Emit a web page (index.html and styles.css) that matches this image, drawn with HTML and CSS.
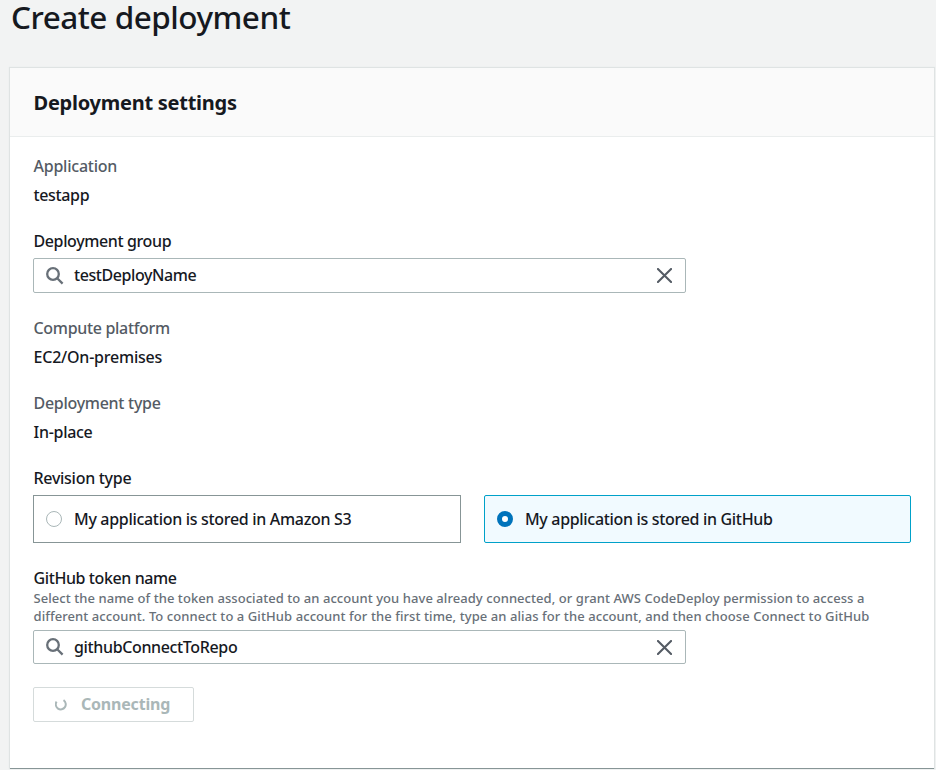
FILE: index.html
```html
<!DOCTYPE html>
<html lang="en">
<head>
<meta charset="utf-8">
<title>Create deployment</title>
<link rel="stylesheet" href="styles.css">
</head>
<body>
<h1 class="page-title"><span class="t-title">Create deployment</span></h1>
<main class="card">
  <header class="card-header"><h2><span class="t-head">Deployment settings</span></h2></header>
  <div class="card-body">
    <section class="field">
      <div class="label muted"><span class="t-app">Application</span></div>
      <div class="value"><span class="t-testapp">testapp</span></div>
    </section>
    <section class="field group">
      <div class="label"><span class="t-group">Deployment group</span></div>
      <div class="search">
        <svg class="icon-search" viewBox="0 0 18 18"><circle cx="7" cy="7" r="5.8"/><path d="M11.2 11.2 16.6 16.6"/></svg>
        <span class="search-text"><span class="t-deploy">testDeployName</span></span>
        <svg class="icon-close" viewBox="0 0 16 16"><path d="M1 1 15 15M15 1 1 15"/></svg>
      </div>
    </section>
    <section class="field">
      <div class="label muted"><span class="t-compute">Compute platform</span></div>
      <div class="value"><span class="t-ec2">EC2/On-premises</span></div>
    </section>
    <section class="field">
      <div class="label muted"><span class="t-type">Deployment type</span></div>
      <div class="value"><span class="t-inplace">In-place</span></div>
    </section>
    <section class="field">
      <div class="label"><span class="t-rev">Revision type</span></div>
      <div class="tiles">
        <div class="tile"><span class="radio"></span><span class="t-s3">My application is stored in Amazon S3</span></div>
        <div class="tile selected"><span class="radio"></span><span class="t-github">My application is stored in GitHub</span></div>
      </div>
    </section>
    <section class="field token">
      <div class="label"><span class="t-token">GitHub token name</span></div>
      <p class="hint"><span class="t-hint1">Select the name of the token associated to an account you have already connected, or grant AWS CodeDeploy permission to access a</span><br><span class="t-hint2">different account. To connect to a GitHub account for the first time, type an alias for the account, and then choose Connect to GitHub</span></p>
      <div class="search">
        <svg class="icon-search" viewBox="0 0 18 18"><circle cx="7" cy="7" r="5.8"/><path d="M11.2 11.2 16.6 16.6"/></svg>
        <span class="search-text"><span class="t-repo">githubConnectToRepo</span></span>
        <svg class="icon-close" viewBox="0 0 16 16"><path d="M1 1 15 15M15 1 1 15"/></svg>
      </div>
    </section>
    <button class="connect" disabled><svg class="spinner" viewBox="0 0 12 12"><path d="M1.6 2.6A5 5 0 1 0 8.5 1.2"/></svg><span class="t-conn">Connecting</span></button>
  </div>
</main>
</body>
</html>
```
FILE: styles.css
```css
* { box-sizing: border-box; }
body {
  margin: 0;
  height: 770px;
  overflow: hidden;
  background: #f2f3f3;
  color: #16191f;
  font: 500 16px/25px "Noto Sans", sans-serif;
  white-space: nowrap;
}
h1, h2, p { margin: 0; }
.page-title {
  height: 68px;
  padding-left: 11px;
  font-size: 31.5px;
  font-weight: 500;
  line-height: 33px;
}
.card {
  width: 924px;
  height: 700px;
  margin-left: 10px;
  background: #fff;
  box-shadow: 0 1px 0 0 #879596, 0 0 1px 1px #dfe3e3;
}
.card-header {
  height: 69px;
  padding: 0 23.5px;
  background: #fafafa;
  border-bottom: 1px solid #eaeded;
}
h2 { font-size: 20px; font-weight: 700; line-height: 69px; }
.card-body { padding: 17px 23px 0; }
.field { margin-bottom: 21px; }
.group { margin-bottom: 23px; }
.label { margin-bottom: 4px; }
.label, .value, .hint { padding-left: 0.5px; }
.muted { color: #545b64; }
.search {
  display: flex;
  align-items: center;
  width: 653px;
  height: 35px;
  padding: 0 13px 0 12px;
  border: 1px solid #aab7b8;
  border-radius: 2px;
}
.search-text { flex: 1; padding-left: 10px; }
svg { display: block; fill: none; }
.icon-search { width: 18px; height: 18px; stroke: #687078; stroke-width: 2.3; }
.icon-close { width: 15px; height: 15px; stroke: #545b64; stroke-width: 2.2; stroke-linecap: round; }
.tiles { display: flex; gap: 23px; }
.tile {
  display: flex;
  align-items: center;
  gap: 12px;
  width: 428px;
  height: 48px;
  padding-left: 12px;
  border: 1px solid #879596;
}
.radio {
  width: 16px;
  height: 16px;
  border: 1px solid #aab7b8;
  border-radius: 50%;
}
.selected { width: 427px; background: #f1faff; border-color: #00a1c9; border-radius: 2px; }
.selected .radio { border: 5px solid #0073bb; background: #fff; }
.token { margin: 23px 0 23px; }
.token .label { margin: 0; height: 24px; }
.token .search { height: 34px; }
.hint { margin-bottom: 5px; color: #687078; font-size: 13px; line-height: 17.5px; }
.connect {
  display: flex;
  align-items: center;
  width: 161px;
  height: 35px;
  padding: 0 0 0 21px;
  gap: 14px;
  border: 1px solid #d5dbdb;
  border-radius: 2px;
  background: #fff;
  color: #aab7b8;
  font: 700 16px/25px "Noto Sans", sans-serif;
}
.spinner { width: 12px; height: 12px; stroke: #aab7b8; stroke-width: 2; }

/* Tracking per text */
.t-title { letter-spacing: -0.5px; }
.t-head { letter-spacing: -0.25px; }
.t-app { letter-spacing: -0.24px; }
.t-testapp { letter-spacing: -0.35px; }
.t-group { letter-spacing: -0.38px; }
.t-deploy { letter-spacing: -0.42px; }
.t-compute { letter-spacing: -0.32px; }
.t-ec2 { letter-spacing: -0.22px; }
.t-type { letter-spacing: -0.28px; }
.t-inplace { letter-spacing: -0.28px; }
.t-rev { letter-spacing: -0.28px; }
.t-s3 { letter-spacing: -0.31px; }
.t-github { letter-spacing: -0.32px; }
.t-token { letter-spacing: -0.4px; }
.t-hint1 { letter-spacing: 0.06px; }
.t-hint2 { letter-spacing: 0.08px; }
.t-repo { letter-spacing: -0.36px; }
.t-conn { letter-spacing: -0.2px; }
```
